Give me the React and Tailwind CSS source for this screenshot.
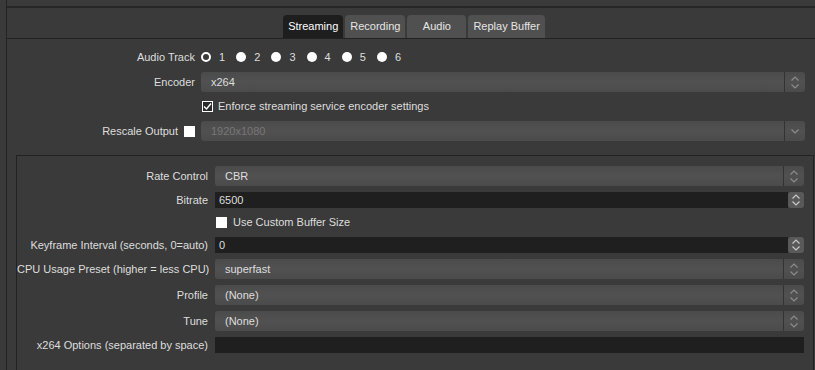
import React from "react";

const Up = ({ c = "#8c8c8c" }) => (
  <svg width="8" height="5" viewBox="0 0 8 5">
    <path d="M0.5 4.5 L4 1 L7.5 4.5" fill="none" stroke={c} strokeWidth="1.2" />
  </svg>
);

const Down = ({ c = "#8c8c8c" }) => (
  <svg width="8" height="5" viewBox="0 0 8 5">
    <path d="M0.5 0.5 L4 4 L7.5 0.5" fill="none" stroke={c} strokeWidth="1.2" />
  </svg>
);

function Combo({ value, pad = "pl-[10px]", disabled, single }) {
  return (
    <div className="flex h-[20px] rounded-[3px] bg-gradient-to-b from-[#4b4b4b] via-[#515151] to-[#4b4b4b]">
      <div className={`flex-1 flex items-center ${pad} ${disabled ? "text-[#777]" : ""}`}>{value}</div>
      <div className="w-[21px] border-l border-[#333] flex flex-col items-center justify-center gap-[3px]">
        {single ? <Down /> : (<><Up /><Down /></>)}
      </div>
    </div>
  );
}

function Spin({ value }) {
  return (
    <div className="flex h-[16px]">
      <div className="flex-1 bg-[#1f1f1f] flex items-center pl-[4px]">{value}</div>
      <div className="w-[16px] rounded-[3px] bg-[#595959] flex flex-col items-center justify-center gap-[2px]">
        <Up c="#c8c8c8" />
        <Down c="#c8c8c8" />
      </div>
    </div>
  );
}

function Check({ checked, filled }) {
  return (
    <div
      className={`w-[11px] h-[11px] shrink-0 flex items-center justify-center ${
        filled ? "bg-white" : "border border-white bg-[#2a2a2a]"
      }`}
    >
      {checked && (
        <svg width="9" height="9" viewBox="0 0 9 9">
          <path d="M1 4.5 L3.5 7 L8 1.5" fill="none" stroke="#fff" strokeWidth="1.4" />
        </svg>
      )}
    </div>
  );
}

function TopRow({ label, children, h = "h-[20px]" }) {
  return (
    <div className={`flex items-center ${h}`}>
      <div className="w-[188px] flex justify-end items-center gap-[6px] shrink-0">{label}</div>
      <div className="flex-1 ml-[6px]">{children}</div>
    </div>
  );
}

function GRow({ label, children, h = "h-[20px]" }) {
  return (
    <div className={`flex items-center ${h}`}>
      <div className="w-[191px] text-right shrink-0">{label}</div>
      <div className="flex-1 ml-[7px]">{children}</div>
    </div>
  );
}

export default function App() {
  const tabs = ["Streaming", "Recording", "Audio", "Replay Buffer"];
  return (
    <div
      className="w-[815px] h-[370px] overflow-hidden bg-[#3a3a3a] text-[#dedede] text-[11px] leading-none whitespace-nowrap"
      style={{ fontFamily: '"Liberation Sans", Arial, sans-serif' }}
    >
      <div className="h-full ml-[6px] border-l border-[#232323] pt-[6px]">
        <div className="border-t-2 border-[#262626]">
          <div className="flex justify-center gap-[2px] pt-[7px] pl-[6px] border-b border-[#222]">
            {tabs.map((t, i) => (
              <div
                key={t}
                className={`h-[23px] min-w-[59px] px-[5px] flex items-center justify-center rounded-t-[4px] ${
                  i === 0 ? "bg-[#1e1e1e] text-white" : "bg-[#505050] text-[#e6e6e6]"
                }`}
              >
                {t}
              </div>
            ))}
          </div>

          <div className="pt-[9px] pr-[10px] flex flex-col gap-[6px]">
            <TopRow label="Audio Track" h="h-[18px]">
              <div className="flex items-center">
                {[1, 2, 3, 4, 5, 6].map((n) => (
                  <div key={n} className="flex items-center w-[35.2px]">
                    <div
                      className={`w-[10px] h-[10px] rounded-full ${
                        n === 1 ? "border-2 border-white" : "bg-white"
                      }`}
                    />
                    <span className="ml-[8px]">{n}</span>
                  </div>
                ))}
              </div>
            </TopRow>
            <TopRow label="Encoder">
              <Combo value="x264" />
            </TopRow>
            <TopRow label="" h="h-[17px]">
              <div className="flex items-center gap-[5px] pl-[1px]">
                <Check checked />
                <span>Enforce streaming service encoder settings</span>
              </div>
            </TopRow>
            <TopRow
              label={
                <>
                  <span>Rescale Output</span>
                  <Check filled />
                </>
              }
            >
              <Combo value="1920x1080" disabled single />
            </TopRow>
          </div>

          <div className="mt-[14px] ml-[9px] mr-[1px] border-l border-t border-r border-[#222] h-[300px] pt-[10px] pr-[9px] flex flex-col gap-[6px]">
            <GRow label="Rate Control">
              <Combo value="CBR" />
            </GRow>
            <GRow label="Bitrate" h="h-[16px]">
              <Spin value="6500" />
            </GRow>
            <GRow label="" h="h-[17px]">
              <div className="flex items-center gap-[6px] pl-[1px]">
                <Check filled />
                <span>Use Custom Buffer Size</span>
              </div>
            </GRow>
            <GRow label="Keyframe Interval (seconds, 0=auto)" h="h-[16px]">
              <Spin value="0" />
            </GRow>
            <GRow label="CPU Usage Preset (higher = less CPU)">
              <Combo value="superfast" />
            </GRow>
            <GRow label="Profile">
              <Combo value="(None)" />
            </GRow>
            <GRow label="Tune">
              <Combo value="(None)" />
            </GRow>
            <GRow label="x264 Options (separated by space)" h="h-[16px]">
              <div className="h-[16px] bg-[#1f1f1f]" />
            </GRow>
          </div>
        </div>
      </div>
    </div>
  );
}
